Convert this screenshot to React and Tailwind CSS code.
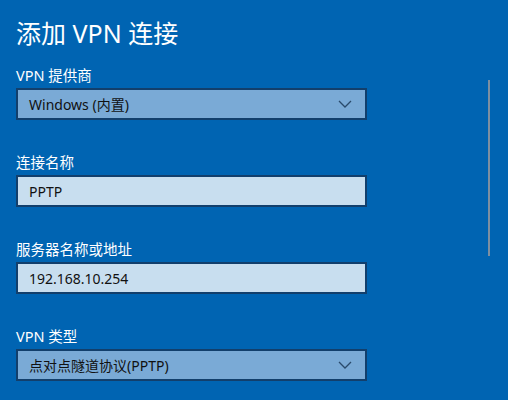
import React from "react";

const font = { fontFamily: '"Segoe UI", "Noto Sans", "Noto Sans CJK SC", sans-serif' };

function Chevron() {
  return (
    <svg width="14" height="8" viewBox="0 0 14 8" className="shrink-0">
      <path d="M1 1 L7 7 L13 1" fill="none" stroke="#2a4a6b" strokeWidth="1.3" />
    </svg>
  );
}

function Field({ label, value, select }) {
  return (
    <div className="flex flex-col gap-[2px]">
      <div className="h-[22px] leading-[22px] text-[14.5px] text-white">{label}</div>
      <div
        className={
          "h-[32px] w-[351px] border-2 border-[#123f6c] flex items-center justify-between pl-[11px] pr-[13px] text-[14px] text-[#111]" +
          (select ? " bg-[#7aaad6]" : " bg-[#c8deef]")
        }
      >
        <span>{value}</span>
        {select && <Chevron />}
      </div>
    </div>
  );
}

export default function App() {
  return (
    <div style={font} className="w-[508px] h-[400px] bg-[#0064b2] flex justify-between overflow-hidden">
      <div className="flex flex-col pl-[16px] pt-[15px]">
        <h1 className="h-[36px] leading-[36px] text-[25px] text-white font-normal mb-[13px]">添加 VPN 连接</h1>
        <div className="flex flex-col gap-[31px]">
          <Field label="VPN 提供商" value="Windows (内置)" select />
          <Field label="连接名称" value="PPTP" />
          <Field label="服务器名称或地址" value="192.168.10.254" />
          <Field label="VPN 类型" value="点对点隧道协议(PPTP)" select />
        </div>
      </div>
      <div className="w-[2px] h-[176px] mt-[80px] mr-[18px] bg-[#7d8fa1]" />
    </div>
  );
}
